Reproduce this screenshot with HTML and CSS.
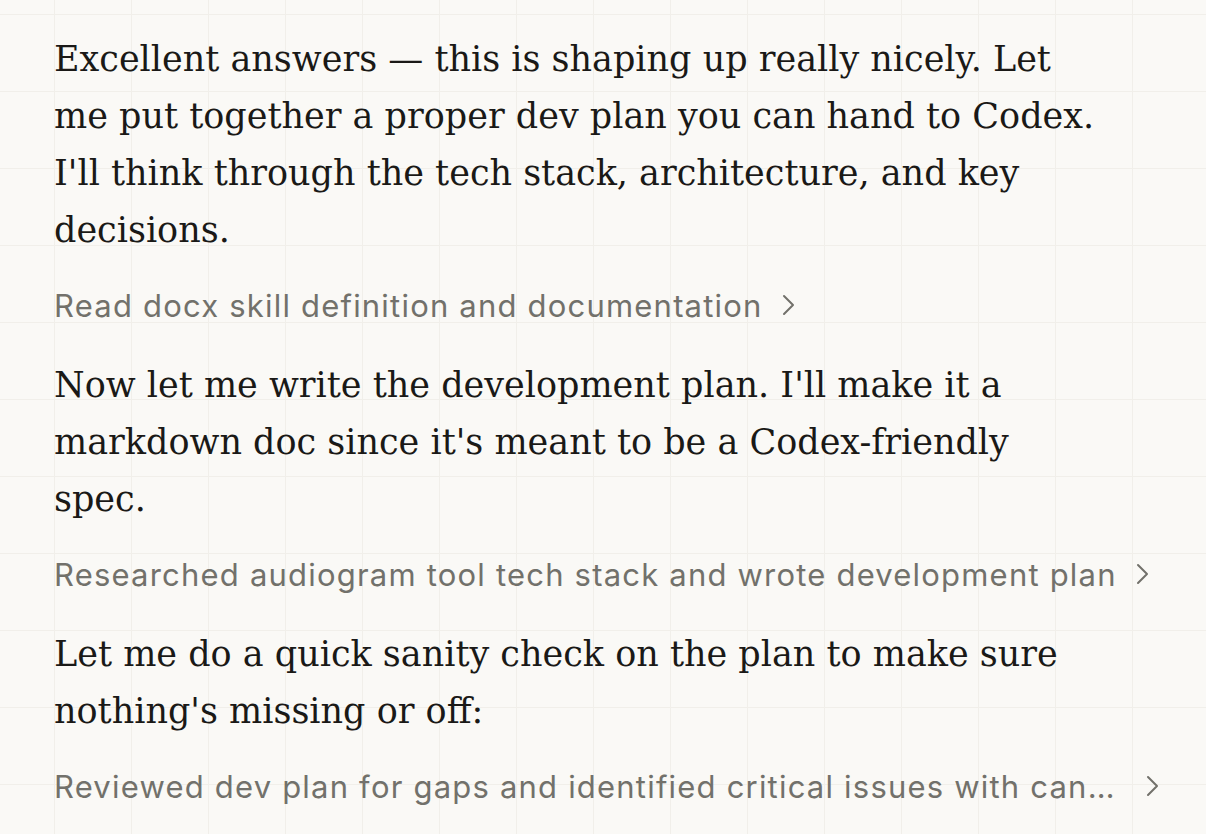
FILE: index.html
```html
<!DOCTYPE html>
<html lang="en">
<head>
<meta charset="utf-8">
<title>Conversation</title>
<link rel="stylesheet" href="styles.css">
</head>
<body>
<main class="thread">
  <p class="prose">Excellent answers — this is shaping up really nicely. Let me put together a proper dev plan you can hand to Codex. I'll think through the tech stack, architecture, and key decisions.</p>
  <div class="step">
    <span class="step-label">Read docx skill definition and documentation</span>
    <svg class="chev" viewBox="0 0 14 22" width="14" height="22"><path d="M2 2 L11 11 L2 20" /></svg>
  </div>
  <p class="prose">Now let me write the development plan. I'll make it a markdown doc since it's meant to be a Codex-friendly spec.</p>
  <div class="step">
    <span class="step-label">Researched audiogram tool tech stack and wrote development plan</span>
    <svg class="chev" viewBox="0 0 14 22" width="14" height="22"><path d="M2 2 L11 11 L2 20" /></svg>
  </div>
  <p class="prose">Let me do a quick sanity check on the plan to make sure nothing's missing or off:</p>
  <div class="step">
    <span class="step-label">Reviewed dev plan for gaps and identified critical issues with candidate fixes</span>
    <svg class="chev" viewBox="0 0 14 22" width="14" height="22"><path d="M2 2 L11 11 L2 20" /></svg>
  </div>
</main>
</body>
</html>
```

FILE: styles.css
```css
html, body {
  margin: 0;
  padding: 0;
}
body {
  width: 1206px;
  height: 834px;
  overflow: hidden;
  background-color: #faf9f6;
  background-image:
    linear-gradient(to right, #f1efea 1px, transparent 1px),
    linear-gradient(to bottom, #f1efea 1px, transparent 1px);
  background-size: 77px 77px;
  background-position: 54px 14px;
}
.thread {
  width: 1106px;
  padding: 31px 0 0 54px;
  display: flex;
  flex-direction: column;
}
.prose {
  margin: 0;
  max-width: 1048px;
  font-family: "DejaVu Serif", serif;
  font-size: 35px;
  line-height: 57px;
  color: #1a1917;
}
.step {
  display: flex;
  align-items: center;
  gap: 19px;
  margin: 25px 0 31px;
  height: 42px;
  color: #72716b;
  font-family: "Inter", sans-serif;
  font-size: 31px;
  letter-spacing: 1.2px;
}
.step-label {
  white-space: nowrap;
  overflow: hidden;
  text-overflow: ellipsis;
  min-width: 0;
}
.chev {
  flex: none;
  fill: none;
  stroke: #72716b;
  stroke-width: 2;
  stroke-linecap: round;
  stroke-linejoin: round;
}
```
